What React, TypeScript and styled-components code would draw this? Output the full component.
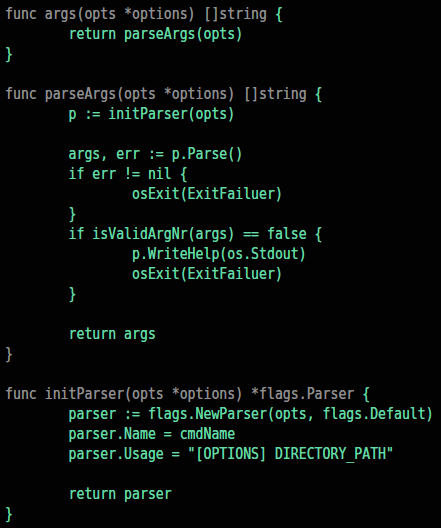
import React from "react";
import styled, { createGlobalStyle } from "styled-components";

const Global = createGlobalStyle`
  html, body { margin: 0; padding: 0; background: #020202; }
`;

const Screen = styled.div`
  width: 441px;
  height: 528px;
  background: #020202;
  overflow: hidden;
  padding: 4px 0 0 5px;
  box-sizing: border-box;
`;

const Code = styled.pre`
  margin: 0;
  font-family: "DejaVu Sans Mono", monospace;
  font-size: 15px;
  line-height: 20px;
  color: #62dba4;
  white-space: pre;
  transform: scaleX(0.879);
  transform-origin: left top;
  text-shadow: 0 0 0.6px currentColor;
`;

const Sig = styled.span`
  color: #8f8f8f;
`;

type Line = { sig?: string; text: string };

const lines: Line[] = [
  { sig: "func args(opts *options) []string ", text: "{" },
  { text: "        return parseArgs(opts)" },
  { text: "}" },
  { text: "" },
  { sig: "func parseArgs(opts *options) []string ", text: "{" },
  { text: "        p := initParser(opts)" },
  { text: "" },
  { text: "        args, err := p.Parse()" },
  { text: "        if err != nil {" },
  { text: "                osExit(ExitFailuer)" },
  { text: "        }" },
  { text: "        if isValidArgNr(args) == false {" },
  { text: "                p.WriteHelp(os.Stdout)" },
  { text: "                osExit(ExitFailuer)" },
  { text: "        }" },
  { text: "" },
  { text: "        return args" },
  { sig: "}", text: "" },
  { text: "" },
  { sig: "func initParser(opts *options) *flags.Parser ", text: "{" },
  { text: "        parser := flags.NewParser(opts, flags.Default)" },
  { text: "        parser.Name = cmdName" },
  { text: '        parser.Usage = "[OPTIONS] DIRECTORY_PATH"' },
  { text: "" },
  { text: "        return parser" },
  { text: "}" },
];

export default function App() {
  return (
    <>
      <Global />
      <Screen>
        <Code>
          {lines.map((l, i) => (
            <React.Fragment key={i}>
              {l.sig && <Sig>{l.sig}</Sig>}
              {l.text}
              {"\n"}
            </React.Fragment>
          ))}
        </Code>
      </Screen>
    </>
  );
}
